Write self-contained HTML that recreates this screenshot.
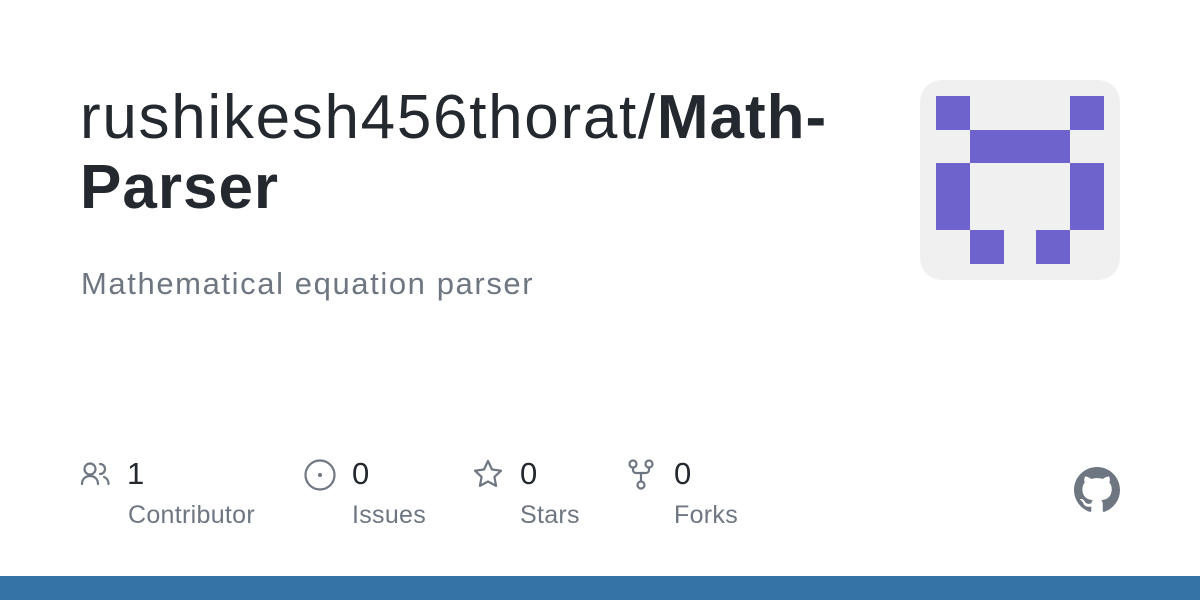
<!DOCTYPE html>
<html><head><meta charset="utf-8"><style>
body{margin:0;width:1200px;height:600px;background:#fff;position:relative;overflow:hidden;font-family:"Liberation Sans",sans-serif;}
.t{position:absolute;left:80px;top:83px;width:800px;font-size:62px;line-height:70px;color:#24292f;letter-spacing:1.7px}
.t b{font-weight:700;letter-spacing:1px}
.d{position:absolute;left:81px;top:266px;font-size:31px;color:#6e7781;letter-spacing:1.6px}
.id{position:absolute;left:920px;top:80px;width:200px;height:200px;background:#f0f0f0;border-radius:22px}
.c{position:absolute;background:#6e62cc}
.n{position:absolute;top:456px;font-size:31px;color:#24292f}
.l{position:absolute;top:501px;font-size:25px;color:#6e7781;letter-spacing:0.3px}
svg.i{position:absolute;fill:none;stroke:#6e7781;stroke-width:2.2;stroke-linecap:round;stroke-linejoin:round}
.bar{position:absolute;left:0;top:576px;width:1200px;height:24px;background:#3572a5}
</style></head><body>
<div class="t">rushikesh456thorat/<b>Math-<br>Parser</b></div>
<div class="d">Mathematical equation parser</div>
<div class="id">
<div class="c" style="left:16px;top:16px;width:34px;height:34px"></div>
<div class="c" style="left:150px;top:16px;width:34px;height:34px"></div>
<div class="c" style="left:50px;top:50px;width:100px;height:33px"></div>
<div class="c" style="left:16px;top:83px;width:34px;height:67px"></div>
<div class="c" style="left:150px;top:83px;width:34px;height:67px"></div>
<div class="c" style="left:50px;top:150px;width:34px;height:34px"></div>
<div class="c" style="left:116px;top:150px;width:34px;height:34px"></div>
</div>
<svg class="i" style="left:80px;top:460px" width="32" height="28" viewBox="0 0 32 28"><circle cx="10" cy="9" r="5.5"/><path d="M2 24c0-5 3.5-8 8-8s8 3 8 8"/><path d="M20 4a5 5 0 0 1 0 10M24 17c3 1 4.5 4 4.5 7"/></svg>
<div class="n" style="left:127px">1</div><div class="l" style="left:128px">Contributor</div>
<svg class="i" style="left:303px;top:458px" width="34" height="34" viewBox="0 0 34 34"><circle cx="17" cy="17" r="14.5"/><circle cx="17" cy="17" r="2" fill="#6e7781" stroke="none"/></svg>
<div class="n" style="left:352px">0</div><div class="l" style="left:352px">Issues</div>
<svg class="i" style="left:472px;top:458px" width="32" height="32" viewBox="0 0 32 32"><path d="M16 3l4 8.5 9 1.2-6.6 6.2 1.7 9L16 23.5 7.9 27.9l1.7-9L3 12.7l9-1.2z"/></svg>
<div class="n" style="left:520px">0</div><div class="l" style="left:520px">Stars</div>
<svg class="i" style="left:627px;top:458px" width="28" height="32" viewBox="0 0 28 32"><circle cx="6" cy="6" r="3.5"/><circle cx="22" cy="6" r="3.5"/><circle cx="14" cy="27" r="3.5"/><path d="M6 9.5v2.5a3 3 0 0 0 3 3h10a3 3 0 0 0 3-3V9.5M14 15v8.5"/></svg>
<div class="n" style="left:674px">0</div><div class="l" style="left:674px">Forks</div>
<svg style="position:absolute;left:1074px;top:467px" width="46" height="46" viewBox="0 0 16 16"><path fill="#6e7781" d="M8 0C3.58 0 0 3.58 0 8c0 3.54 2.29 6.53 5.47 7.59.4.07.55-.17.55-.38 0-.19-.01-.82-.01-1.49-2.01.37-2.53-.49-2.69-.94-.09-.23-.48-.94-.82-1.13-.28-.15-.68-.52-.01-.53.63-.01 1.08.58 1.23.82.72 1.21 1.87.87 2.330.66.07-.52.28-.87.51-1.07-1.78-.2-3.64-.89-3.64-3.95 0-.87.31-1.59.82-2.15-.08-.2-.36-1.02.08-2.12 0 0 .67-.21 2.2.82.64-.18 1.32-.27 2-.27.68 0 1.36.09 2 .27 1.53-1.04 2.2-.82 2.2-.82.44 1.1.16 1.92.08 2.12.51.56.82 1.27.82 2.15 0 3.07-1.87 3.75-3.65 3.95.29.25.54.73.54 1.48 0 1.07-.01 1.93-.01 2.2 0 .21.15.46.55.38A8.013 8.013 0 0016 8c0-4.42-3.58-8-8-8z"/></svg>
<div class="bar"></div>
</body></html>
